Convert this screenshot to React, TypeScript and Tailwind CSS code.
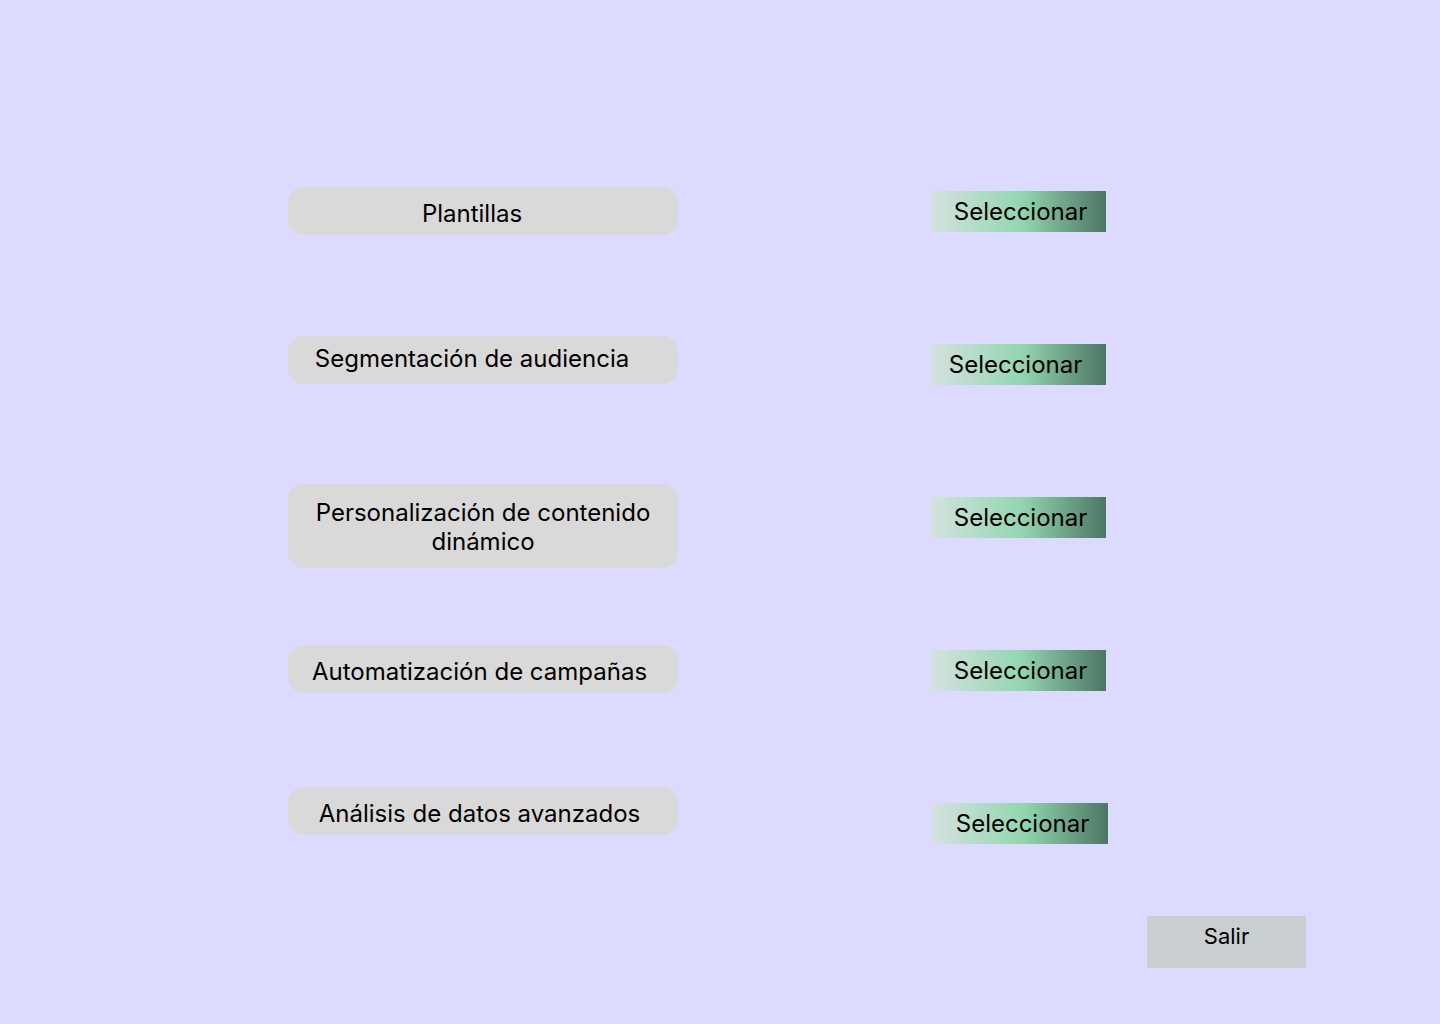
import React from "react";

const items = [
  { label: "Plantillas", box: "mt-0 h-[48px] pt-[5px] pr-[22px]" },
  { label: "Segmentación de audiencia", box: "mt-[101px] h-[48px] pb-[3px] pr-[22px]" },
  { label: "Personalización de contenido dinámico", box: "mt-[100px] h-[84px] pt-[1px] px-[26px]" },
  { label: "Automatización de campañas", box: "mt-[77px] h-[48px] pt-[5px] pr-[7px]" },
  { label: "Análisis de datos avanzados", box: "mt-[94px] h-[48px] pt-[5px] pr-[7px]" },
];

const buttons = [
  "mt-[4px] ml-0 pl-[5px]",
  "mt-[112px] ml-0 pr-[5px]",
  "mt-[112px] ml-0 pl-[5px]",
  "mt-[112px] ml-0 pl-[5px]",
  "mt-[112px] ml-[2px] pl-[5px]",
];

export default function App() {
  return (
    <div
      className="w-[1440px] h-[1024px] bg-[#dcdafe] text-black flex flex-col"
      style={{ fontFamily: "Inter, 'Noto Sans', sans-serif" }}
    >
      <div className="flex flex-row pt-[187px] pl-[288px]">
        <div className="flex flex-col w-[390px]">
          {items.map((it) => (
            <div
              key={it.label}
              className={`flex items-center justify-center text-center rounded-[16px] bg-[#d9d9d9] text-[24px] leading-[29px] ${it.box}`}
            >
              {it.label}
            </div>
          ))}
        </div>
        <div className="flex flex-col ml-[252px]">
          {buttons.map((b, i) => (
            <button
              key={i}
              className={`w-[176px] h-[41px] flex items-center justify-center text-[24px] leading-[29px] bg-[linear-gradient(90deg,#d5e2e0_0%,#93d6b0_52%,#4d7664_100%)] ${b}`}
            >
              Seleccionar
            </button>
          ))}
        </div>
      </div>
      <div className="flex flex-row justify-end pr-[134px] mt-[72px]">
        <button className="w-[159px] h-[52px] bg-[#c9ced0] flex justify-center items-start pt-[7px] text-[22px] leading-[27px]">
          Salir
        </button>
      </div>
    </div>
  );
}
